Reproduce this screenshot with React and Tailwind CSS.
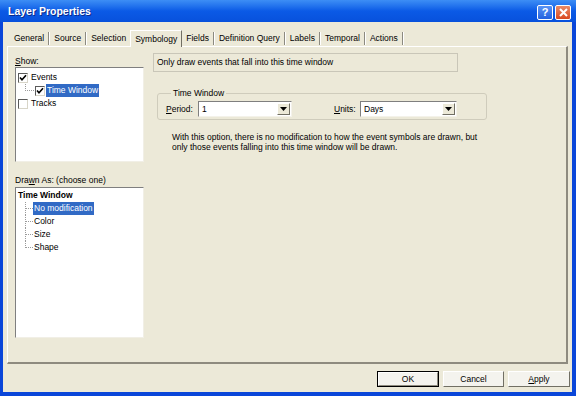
import React from "react";

function Check() {
  return (
    <span className="w-[10px] h-[10px] bg-white border border-t-[#5a5a5a] border-l-[#5a5a5a] border-b-[#d8d5c8] border-r-[#d8d5c8] flex items-center justify-center shrink-0">
      <svg width="8" height="8" viewBox="0 0 8 8">
        <path d="M1 3.5 L3 5.8 L7 1.2" stroke="#000" strokeWidth="1.6" fill="none" />
      </svg>
    </span>
  );
}

function EmptyBox() {
  return (
    <span className="w-[10px] h-[10px] bg-white border border-t-[#5a5a5a] border-l-[#5a5a5a] border-b-[#d8d5c8] border-r-[#d8d5c8] shrink-0" />
  );
}

function Combo({ value, width }) {
  return (
    <div
      className="h-[16px] bg-white border border-t-[#7f7f7f] border-l-[#7f7f7f] border-b-[#f4f2ea] border-r-[#f4f2ea] flex items-stretch"
      style={{ width }}
    >
      <span className="flex-1 pl-[3px] leading-[14px] text-black">{value}</span>
      <span className="w-[13px] bg-[#ece9d8] border border-t-white border-l-white border-b-[#716f64] border-r-[#716f64] flex items-center justify-center m-[1px]">
        <svg width="7" height="4" viewBox="0 0 7 4">
          <path d="M0 0 H7 L3.5 4 Z" fill="#000" />
        </svg>
      </span>
    </div>
  );
}

function TreeChild({ label, selected, last }) {
  return (
    <div className="flex h-[13px] items-stretch">
      <span className="w-[7px] shrink-0" />
      <span className="relative w-[8px] shrink-0">
        <span
          className={
            "absolute left-0 top-0 border-l border-dotted border-[#9a9a9a] " +
            (last ? "h-[7px]" : "h-[13px]")
          }
        />
        <span className="absolute left-0 top-[6px] w-[8px] border-t border-dotted border-[#9a9a9a]" />
      </span>
      <span
        className={
          "px-[1px] leading-[13px] " +
          (selected ? "bg-[#316ac5] text-white" : "text-black")
        }
      >
        {label}
      </span>
    </div>
  );
}

function Tab({ label, selected }) {
  if (selected) {
    return (
      <div className="h-[17px] px-[4px] bg-[#ece9d8] border-t border-l border-white border-r border-r-[#716f64] leading-[16px] relative z-10 -mb-[1px]">
        {label}
      </div>
    );
  }
  return <div className="h-[14px] px-[4px] leading-[15px] mb-[1px]">{label}</div>;
}

function Divider() {
  return <span className="w-[2px] h-[13px] mb-[1px] border-l border-[#8c8a80] border-r border-r-white" />;
}

export default function App() {
  return (
    <div className="w-[576px] h-[396px] bg-[#0a46d9] flex flex-col overflow-hidden font-['Liberation_Sans',Arial,sans-serif] text-[8.5px] text-black">
      {/* Title bar */}
      <div className="h-[22px] shrink-0 flex items-center pl-[8px] pr-[5px] bg-linear-to-b from-[#3d8ef5] via-[#0b5ae6] to-[#0851dc]">
        <span className="text-white font-bold text-[10.5px] [text-shadow:1px_1px_0_#0a2a8a] mt-[2px]">Layer Properties</span>
        <div className="flex-1" />
        <div className="flex gap-[2px] mt-[2px]">
          <span className="w-[16px] h-[15px] rounded-[2px] border border-white bg-linear-to-b from-[#5a94f5] to-[#2360df] flex items-center justify-center text-white font-bold text-[11px] leading-none">
            ?
          </span>
          <span className="w-[16px] h-[15px] rounded-[2px] border border-white bg-linear-to-b from-[#e98a66] to-[#d9471d] flex items-center justify-center">
            <svg width="9" height="9" viewBox="0 0 9 9">
              <path d="M1 1 L8 8 M8 1 L1 8" stroke="#fff" strokeWidth="2" />
            </svg>
          </span>
        </div>
      </div>

      {/* Body */}
      <div className="flex-1 ml-[3px] mr-[4px] mb-[4px] bg-[#ece9d8] flex flex-col">
        {/* Tabs */}
        <div className="h-[17px] mt-[7px] flex items-end pl-[7px]">
          <Tab label="General" />
          <Divider />
          <Tab label="Source" />
          <Divider />
          <Tab label="Selection" />
          <Tab label="Symbology" selected />
          <Tab label="Fields" />
          <Divider />
          <Tab label="Definition Query" />
          <Divider />
          <Tab label="Labels" />
          <Divider />
          <Tab label="Temporal" />
          <Divider />
          <Tab label="Actions" />
          <Divider />
        </div>

        {/* Panel */}
        <div className="mx-[4px] h-[318px] border-t border-l border-white border-r-2 border-b-2 border-r-[#8e8b7f] border-b-[#8e8b7f] flex pl-[7px]">
          {/* Left column */}
          <div className="w-[129px] flex flex-col pt-[7px]">
            <div className="h-[13px] leading-[14px]">
              <span className="underline">S</span>how:
            </div>
            <div className="h-[95px] bg-white border border-t-[#7f7f7f] border-l-[#7f7f7f] border-b-[#f1efe6] border-r-[#f1efe6] pt-[3px] pl-[2px]">
              <div className="flex items-center h-[13px] gap-[3px]">
                <Check />
                <span>Events</span>
              </div>
              <div className="flex items-stretch h-[13px]">
                <span className="w-[7px] shrink-0" />
                <span className="relative w-[10px] shrink-0">
                  <span className="absolute left-0 top-0 h-[7px] border-l border-dotted border-[#9a9a9a]" />
                  <span className="absolute left-0 top-[6px] w-[9px] border-t border-dotted border-[#9a9a9a]" />
                </span>
                <span className="flex items-center">
                  <Check />
                </span>
                <span className="ml-[1px] px-[1px] bg-[#316ac5] text-white leading-[13px]">Time Window</span>
              </div>
              <div className="flex items-center h-[13px] gap-[3px]">
                <EmptyBox />
                <span>Tracks</span>
              </div>
            </div>
            <div className="h-[13px] leading-[13px] mt-[12px]">
              Dra<span className="underline">w</span>n As: (choose one)
            </div>
            <div className="h-[151px] bg-white border border-t-[#7f7f7f] border-l-[#7f7f7f] border-b-[#f1efe6] border-r-[#f1efe6] pl-[2px] pt-[1px]">
              <div className="h-[13px] leading-[13px] font-bold">Time Window</div>
              <TreeChild label="No modification" selected />
              <TreeChild label="Color" />
              <TreeChild label="Size" />
              <TreeChild label="Shape" last />
            </div>
          </div>

          {/* Right column */}
          <div className="ml-[9px] flex flex-col pt-[6px]">
            <div className="w-[305px] h-[19px] border border-[#c9c6b8] flex items-center pl-[3px]">
              Only draw events that fall into this time window
            </div>
            <fieldset className="ml-[4px] mt-[16px] w-[330px] border border-[#cfccbc] rounded-[3px] pl-[8px] pb-[2px] pt-[3px] m-0">
              <legend className="ml-[5px] px-[2px] leading-[10px]">Time Window</legend>
              <div className="flex items-center">
                <span className="w-[32px]">
                  <span className="underline">P</span>eriod:
                </span>
                <Combo value="1" width={94} />
                <span className="ml-[42px] w-[26px]">
                  <span className="underline">U</span>nits:
                </span>
                <Combo value="Days" width={97} />
              </div>
            </fieldset>
            <div className="ml-[19px] mt-[12px] leading-[10px]">
              <div>With this option, there is no modification to how the event symbols are drawn, but</div>
              <div>only those events falling into this time window will be drawn.</div>
            </div>
          </div>
        </div>

        {/* Buttons */}
        <div className="flex justify-end gap-[4px] mt-[7px] pr-[2px]">
          <div className="w-[62px] h-[16px] border border-black bg-[#f4f3ee] flex items-center justify-center">
            <span className="w-full h-full border border-t-white border-l-white border-b-[#8e8b7f] border-r-[#8e8b7f] flex items-center justify-center">
              OK
            </span>
          </div>
          <div className="w-[61px] h-[16px] bg-[#f4f3ee] border border-t-white border-l-white border-b-[#716f64] border-r-[#716f64] flex items-center justify-center">
            Cancel
          </div>
          <div className="w-[62px] h-[16px] bg-[#f4f3ee] border border-t-white border-l-white border-b-[#716f64] border-r-[#716f64] flex items-center justify-center">
            <span>
              <span className="underline">A</span>pply
            </span>
          </div>
        </div>
      </div>
    </div>
  );
}
